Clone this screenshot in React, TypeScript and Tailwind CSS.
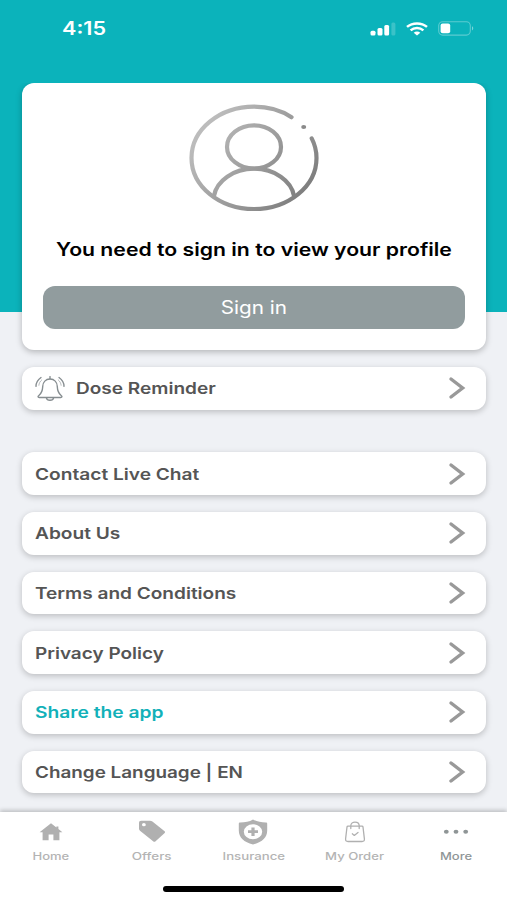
import clsx from "clsx";
import type { ReactNode } from "react";

type MenuItem = {
  label: string;
  stretch: string;
  highlight?: boolean;
};

const menuItems: MenuItem[] = [
  { label: "Contact Live Chat", stretch: "scale-x-[1.195]" },
  { label: "About Us", stretch: "scale-x-[1.195]" },
  { label: "Terms and Conditions", stretch: "scale-x-[1.19]" },
  { label: "Privacy Policy", stretch: "scale-x-[1.185]" },
  { label: "Share the app", stretch: "scale-x-[1.2]", highlight: true },
  { label: "Change Language | EN", stretch: "scale-x-[1.18]" },
];

function SignalIcon() {
  return (
    <svg width="26" height="14" viewBox="0 0 26 14" fill="#fff">
      <rect x="0.5" y="8.7" width="5" height="4.8" rx="1.5" />
      <rect x="7.5" y="6" width="5" height="7.5" rx="1.5" />
      <rect x="14.3" y="3" width="4.8" height="10.5" rx="1.5" />
      <rect x="21.4" y="0.5" width="4" height="13" rx="1.5" opacity="0.2" />
    </svg>
  );
}

function WifiIcon() {
  return (
    <svg width="22" height="14" viewBox="0 0 22 14" fill="none" stroke="#fff" strokeWidth="2.5">
      <path d="M1 4.9C6.5 0.2 15.5 0.2 21 4.9" />
      <path d="M4.6 8.4C8.2 5.2 13.8 5.2 17.4 8.4" />
      <path d="M7.7 10.7C9.6 9 12.4 9 14.3 10.7L11 13.6Z" fill="#fff" stroke="none" />
    </svg>
  );
}

function BatteryIcon() {
  return (
    <svg width="36" height="15" viewBox="0 0 36 15" fill="none">
      <rect x="0.7" y="0.7" width="31.6" height="13.4" rx="4" stroke="#fff" strokeOpacity="0.33" strokeWidth="1.1" />
      <rect x="2.6" y="2.6" width="9.6" height="9.6" rx="2" fill="#fff" />
      <path d="M34 5.3C35.7 6 35.7 8.7 34 9.5Z" fill="#fff" fillOpacity="0.45" />
    </svg>
  );
}

function ProfileIcon() {
  return (
    <svg width="132" height="108" viewBox="0 0 132 108" fill="none" strokeWidth="4.2" strokeLinecap="round">
      <defs>
        <linearGradient id="profile" gradientUnits="userSpaceOnUse" x1="20" y1="20" x2="112" y2="92">
          <stop offset="0" stopColor="#bcbcbc" />
          <stop offset="1" stopColor="#7f7f7f" />
        </linearGradient>
      </defs>
      <g stroke="url(#profile)">
        <path d="M103.5 13.2C93 6.2 80 2.6 66 2.6C31.5 2.6 3.5 25.6 3.5 53.9C3.5 82.2 31.5 105 66 105C100.5 105 128.5 82.2 128.5 53.9C128.5 46.9 126.8 40.4 123.7 34.4" />
        <ellipse cx="66" cy="42.9" rx="27" ry="21.6" />
        <path d="M26 91.9C28.5 76.9 45.5 64.7 66 64.7C86.5 64.7 103.5 76.9 106 91.9" />
      </g>
      <ellipse cx="115.7" cy="22.9" rx="2.5" ry="2" fill="#8a8a8a" />
    </svg>
  );
}

function BellIcon() {
  return (
    <svg width="30" height="27" viewBox="0 0 31 27" fill="none" stroke="#868d90" strokeWidth="1.4" strokeLinecap="round" strokeLinejoin="round">
      <path d="M15.5 3.5V1.2" />
      <path d="M15.5 3.7C11 3.7 8.2 7 8 11.3C7.8 15.8 6.9 18.5 4 20.7C2.6 21.8 3 22.8 4.4 22.8H26.6C28 22.8 28.4 21.8 27 20.7C24.1 18.5 23.2 15.8 23 11.3C22.8 7 20 3.7 15.5 3.7Z" />
      <path d="M11.8 23.1C12.3 26.5 18.7 26.5 19.2 23.1" />
      <path d="M1 11.3C1.1 7.4 3 4.4 6.2 2.2M30 11.3C29.9 7.4 28 4.4 24.8 2.2" />
      <path d="M4 10.2C4.2 8 5.2 6.1 7 4.6M27 10.2C26.8 8 25.8 6.1 24 4.6" strokeWidth="0.6" />
    </svg>
  );
}

function ChevronIcon() {
  return (
    <svg width="18" height="24" viewBox="0 0 18 24" fill="none" stroke="#999999" strokeWidth="3.4" strokeLinecap="round">
      <path d="M3 3L14.6 12L3 21" />
    </svg>
  );
}

function HomeIcon() {
  return (
    <svg width="24" height="18" viewBox="0 0 24 18" fill="#b0b0b0">
      <path d="M12 0.2L0.6 9.3H3.6V17.3H9.6V11.5H14.4V17.3H20.4V9.3H23.4L19.4 6.1V3.4H17.4V4.5Z" />
    </svg>
  );
}

function OffersIcon() {
  return (
    <svg width="28" height="23" viewBox="0 0 28 23" fill="#b0b0b0">
      <path
        fillRule="evenodd"
        d="M1 2.9C1 1.5 1.7 0.8 3.2 0.8H12C13 0.8 13.7 1 14.4 1.5L26.3 11C27.3 11.8 27.3 12.4 26.4 13.2L17.6 21.3C16.8 22 16 22 15.1 21.3L2 10.8C1.3 10.2 1 9.6 1 8.8ZM5.9 3.1A1.9 1.6 0 1 0 5.9 6.3A1.9 1.6 0 1 0 5.9 3.1Z"
      />
    </svg>
  );
}

function InsuranceIcon() {
  return (
    <svg width="30" height="26" viewBox="0 0 30 26" fill="#b0b0b0">
      <path
        fillRule="evenodd"
        d="M15 0.5C18.5 2.8 23 3.3 27.8 3.4C28.8 3.4 29.2 3.8 29.2 4.6V11.5C29.2 18.5 24 23.3 15 25.4C6 23.3 0.8 18.5 0.8 11.5V4.6C0.8 3.8 1.2 3.4 2.2 3.4C7 3.3 11.5 2.8 15 0.5ZM15 5.2A9.2 7.5 0 1 0 15 20.2A9.2 7.5 0 1 0 15 5.2Z"
      />
      <path d="M13.4 8.5H16.6V11.3H20V14.1H16.6V16.9H13.4V14.1H10V11.3H13.4Z" />
    </svg>
  );
}

function OrderIcon() {
  return (
    <svg width="22" height="22" viewBox="0 0 22 22" fill="none" stroke="#b0b0b0" strokeWidth="1.3" strokeLinecap="round" strokeLinejoin="round">
      <path d="M4 5.2H18C18.6 5.2 18.9 5.5 19 6L20.4 17.8C20.6 19.8 19.8 20.5 18 20.5H4C2.2 20.5 1.4 19.8 1.6 17.8L3 6C3.1 5.5 3.4 5.2 4 5.2Z" />
      <path d="M6.8 7.5V4.7C6.8 -0.2 15.2 -0.2 15.2 4.7V7.5" />
      <path d="M8.3 12.8L10.3 14.4L14 11.5" />
    </svg>
  );
}

function MoreIcon() {
  return (
    <svg width="26" height="6" viewBox="0 0 26 6" fill="#8f9596">
      <ellipse cx="3.3" cy="2.7" rx="2.4" ry="2" />
      <ellipse cx="13" cy="2.7" rx="2.4" ry="2" />
      <ellipse cx="22.7" cy="2.7" rx="2.4" ry="2" />
    </svg>
  );
}

const tabs = [
  { label: "Home", icon: <HomeIcon />, stretch: "scale-x-[1.24]" },
  { label: "Offers", icon: <OffersIcon />, stretch: "scale-x-[1.28]" },
  { label: "Insurance", icon: <InsuranceIcon />, stretch: "scale-x-[1.26]" },
  { label: "My Order", icon: <OrderIcon />, stretch: "scale-x-[1.25]" },
  { label: "More", icon: <MoreIcon />, stretch: "scale-x-[1.24]", active: true },
];

function MenuRow({ label, stretch, highlight, icon }: MenuItem & { icon?: ReactNode }) {
  return (
    <button className="flex h-[42.7px] w-full shrink-0 items-center rounded-xl bg-white pr-5 pl-[13px] shadow-[0_2px_6px_rgba(0,0,0,0.22)]">
      {icon && <span className="mr-[11.5px]">{icon}</span>}
      <span
        className={clsx(
          "origin-left text-[16px] leading-6 font-semibold whitespace-nowrap",
          stretch,
          highlight ? "text-[#12b1b9]" : "text-[#555555]"
        )}
      >
        {label}
      </span>
      <span className="ml-auto">
        <ChevronIcon />
      </span>
    </button>
  );
}

export default function App() {
  return (
    <div className="flex h-[900px] w-[507px] flex-col overflow-hidden bg-[linear-gradient(#0bb3bb_312.5px,#eff1f5_312.5px)] font-['Inter','Liberation_Sans',sans-serif]">
      <header className="flex h-[83px] shrink-0 items-start justify-between pt-[21px] pr-[33px] pl-[61.5px] text-white">
        <span className="-mt-1 origin-left scale-x-[1.2] text-[18px] leading-6 font-semibold">4:15</span>
        <div className="flex items-center gap-2.5">
          <SignalIcon />
          <WifiIcon />
          <BatteryIcon />
        </div>
      </header>

      <main className="flex min-h-0 flex-1 flex-col overflow-hidden px-[21.5px]">
        <section className="flex h-[266.5px] shrink-0 flex-col items-center rounded-xl bg-white px-[21px] pt-[20.5px] shadow-[0_2px_6px_rgba(0,0,0,0.25)]">
          <ProfileIcon />
          <h1 className="mt-[26px] scale-x-[1.178] text-[18px] leading-6 font-semibold whitespace-nowrap text-black">
            You need to sign in to view your profile
          </h1>
          <button className="mt-[24.5px] flex h-[42.5px] w-full items-center justify-center rounded-xl bg-[#919c9e] pt-0.5 text-white">
            <span className="scale-x-[1.15] text-[18px] leading-6">Sign in</span>
          </button>
        </section>

        <div className="mt-[17.5px] shrink-0">
          <MenuRow label="Dose Reminder" stretch="scale-x-[1.19]" icon={<BellIcon />} />
        </div>

        <div className="mt-[42.5px] flex flex-col gap-[17px]">
          {menuItems.map((item) => (
            <MenuRow key={item.label} {...item} />
          ))}
        </div>
      </main>

      <nav className="z-10 flex h-[88.5px] shrink-0 flex-col items-center bg-white shadow-[0_-2px_4px_rgba(0,0,0,0.2)]">
        <div className="grid w-full grid-cols-5 pt-[6.5px]">
          {tabs.map((tab) => (
            <button key={tab.label} className="flex flex-col items-center">
              <span className="flex h-[27px] items-center">{tab.icon}</span>
              <span
                className={clsx(
                  "mt-1 text-[10.5px] leading-4 font-medium whitespace-nowrap",
                  tab.stretch,
                  tab.active ? "text-[#8f9697]" : "text-[#b4b4b4]"
                )}
              >
                {tab.label}
              </span>
            </button>
          ))}
        </div>
        <div className="mt-[21px] h-[5.5px] w-[181px] rounded-full bg-black" />
      </nav>
    </div>
  );
}
